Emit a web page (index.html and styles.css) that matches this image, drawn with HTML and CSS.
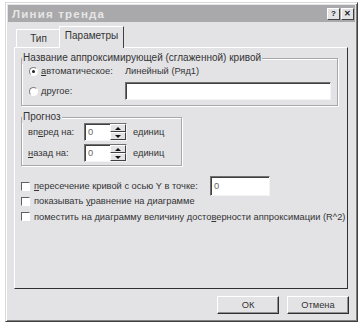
FILE: index.html
```html
<!DOCTYPE html>
<html lang="ru">
<head>
    <meta charset="UTF-8">
    <title>Линия тренда</title>
    <link rel="stylesheet" href="styles.css">
</head>
<body>
    <div class="dialog">
        <div class="titlebar">
            <span class="title">Линия тренда</span>
            <span class="tbtn">?</span>
            <span class="tbtn">&#x2715;</span>
        </div>

        <div class="tabs">
            <div class="tab">Тип</div>
            <div class="tab active">Параметры</div>
        </div>

        <div class="panel">
            <fieldset class="group name-group">
                <legend>Название аппроксимирующей (сглаженной) кривой</legend>
                <div class="row">
                    <span class="radio checked"></span>
                    <span class="lbl auto-lbl"><u>а</u>втоматическое:</span>
                    <span class="value">Линейный (Ряд1)</span>
                </div>
                <div class="row">
                    <span class="radio"></span>
                    <span class="lbl auto-lbl"><u>д</u>ругое:</span>
                    <span class="field wide"></span>
                </div>
            </fieldset>

            <fieldset class="group forecast">
                <legend>Прогноз</legend>
                <div class="row">
                    <span class="lbl fc-lbl">вп<u>е</u>ред на:</span>
                    <span class="field spin"><span class="num">0</span><span class="spinner"><i class="up"></i><i class="down"></i></span></span>
                    <span class="lbl">единиц</span>
                </div>
                <div class="row">
                    <span class="lbl fc-lbl"><u>н</u>азад на:</span>
                    <span class="field spin"><span class="num">0</span><span class="spinner"><i class="up"></i><i class="down"></i></span></span>
                    <span class="lbl">единиц</span>
                </div>
            </fieldset>

            <div class="checks">
                <div class="row">
                    <span class="check"></span>
                    <span class="lbl cross-lbl"><u>п</u>ересечение кривой с осью Y в точке:</span>
                    <span class="field short"><span class="num">0</span></span>
                </div>
                <div class="row">
                    <span class="check"></span>
                    <span class="lbl">показывать <u>у</u>равнение на диаграмме</span>
                </div>
                <div class="row">
                    <span class="check"></span>
                    <span class="lbl">поместить на диаграмму величину досто<u>в</u>ерности аппроксимации (R^2)</span>
                </div>
            </div>
        </div>

        <div class="buttons">
            <span class="button">ОК</span>
            <span class="button">Отмена</span>
        </div>
    </div>
</body>
</html>
```

FILE: styles.css
```css
body {
    margin: 0;
    background: #fff;
    font-family: "Liberation Sans", Arial, sans-serif;
    font-size: 9.3px;
    color: #333;
}
.dialog {
    box-sizing: border-box;
    width: 353px;
    height: 320px;
    margin: 2px 0 0 5px;
    padding: 2px;
    background: #e3e3e6;
    border: 1px solid;
    border-color: #d8d8d8 #404040 #404040 #d8d8d8;
    box-shadow: inset 1px 1px 0 #fff, inset -1px -1px 0 #808080;
    display: flex;
    flex-direction: column;
}
.titlebar {
    height: 17px;
    background: #a9a9ab;
    display: flex;
    align-items: center;
    padding: 0 1px 0 4px;
    gap: 1px;
}
.title {
    flex: 1;
    color: #e6e6e6;
    font-weight: bold;
    font-size: 11.5px;
    letter-spacing: 1.2px;
}
.tbtn {
    box-sizing: border-box;
    width: 13px;
    height: 12px;
    background: #e3e3e6;
    border: 1px solid;
    border-color: #fff #404040 #404040 #fff;
    font-size: 8px;
    font-weight: bold;
    line-height: 10px;
    text-align: center;
    color: #222;
}
.tabs {
    display: flex;
    align-items: flex-end;
    height: 25px;
    padding-left: 8px;
    font-size: 10px;
}
.tab {
    box-sizing: border-box;
    height: 18px;
    padding: 0 12px;
    border: 1px solid #fff;
    border-right-color: #404040;
    border-bottom: none;
    line-height: 17px;
}
.tab:first-child {
    width: 45px;
    text-align: center;
    margin-right: -2px;
}
.tab.active {
    height: 22px;
    width: 65px;
    padding: 0;
    text-align: center;
    line-height: 18px;
    background: #e3e3e6;
    margin-bottom: -1px;
    position: relative;
}
.panel {
    box-sizing: border-box;
    height: 242px;
    margin: 0 7px 0 6px;
    border: 1px solid;
    border-color: #fff #303030 #303030 #fff;
    padding: 4px 12px 0 6px;
}
.group {
    margin: 0;
    border: 1px solid #a8a8aa;
    box-shadow: inset 1px 1px 0 #fff, 1px 1px 0 #fff;
    padding: 0 6px;
}
.group legend {
    padding: 0 1px;
    margin-left: -6px;
    background: #e3e3e6;
    font-size: 10px;
    line-height: 12px;
}
.name-group {
    padding-bottom: 4px;
}
.forecast {
    width: 161px;
    box-sizing: border-box;
    margin-top: 5px;
    padding-bottom: 3px;
}
.row {
    display: flex;
    align-items: center;
}
.name-group .row:first-of-type {
    height: 14px;
}
.name-group .row + .row {
    height: 20px;
    margin-top: 3px;
}
.radio {
    flex-shrink: 0;
    box-sizing: border-box;
    width: 9px;
    height: 9px;
    border-radius: 50%;
    background: #fff;
    border: 1px solid;
    border-color: #808080 #fff #fff #808080;
    margin: 0 3px 0 1px;
    position: relative;
}
.radio.checked::after {
    content: "";
    position: absolute;
    left: 2px;
    top: 2px;
    width: 3px;
    height: 3px;
    border-radius: 50%;
    background: #222;
}
.lbl {
    white-space: nowrap;
}
.auto-lbl {
    width: 84px;
}
.field {
    flex-shrink: 0;
    box-sizing: border-box;
    display: flex;
    align-items: center;
    background: #fff;
    border: 1px solid;
    border-color: #707070 #f4f4f4 #f4f4f4 #707070;
    box-shadow: inset 1px 1px 0 #404040;
}
.field.wide {
    width: 206px;
    height: 18px;
}
.num {
    padding-left: 3px;
    flex: 1;
    color: #666;
}
.forecast .row {
    height: 18px;
}
.forecast .row + .row {
    margin-top: 3px;
}
.fc-lbl {
    width: 56px;
}
.field.spin {
    width: 43px;
    height: 18px;
    margin-right: 6px;
}
.spinner {
    display: flex;
    flex-direction: column;
    width: 16px;
    height: 16px;
}
.spinner i {
    flex: 1;
    background: #e3e3e6;
    border: 1px solid;
    border-color: #fff #404040 #404040 #fff;
    display: flex;
    align-items: center;
    justify-content: center;
}
.spinner i::before {
    content: "";
    border-left: 3px solid transparent;
    border-right: 3px solid transparent;
}
.spinner .up::before {
    border-bottom: 3px solid #111;
}
.spinner .down::before {
    border-top: 3px solid #111;
}
.checks {
    margin-top: 10px;
}
.checks .row:nth-child(1) {
    height: 20px;
}
.checks .row:nth-child(2) {
    height: 14px;
    margin-top: -2px;
}
.checks .row:nth-child(3) {
    height: 17px;
}
.check {
    flex-shrink: 0;
    box-sizing: border-box;
    width: 9px;
    height: 9px;
    background: #fff;
    border: 1px solid;
    border-color: #606060 #fff #fff #606060;
    margin-right: 4px;
}
.cross-lbl {
    width: 176px;
}
.field.short {
    width: 60px;
    height: 20px;
}
.buttons {
    display: flex;
    justify-content: flex-end;
    gap: 8px;
    margin-top: 7px;
    padding-right: 6px;
}
.button {
    box-sizing: border-box;
    width: 62px;
    height: 18px;
    line-height: 16px;
    text-align: center;
    background: #e3e3e6;
    border: 1px solid;
    border-color: #fff #303030 #303030 #fff;
    box-shadow: inset -1px -1px 0 #909090;
}
```
